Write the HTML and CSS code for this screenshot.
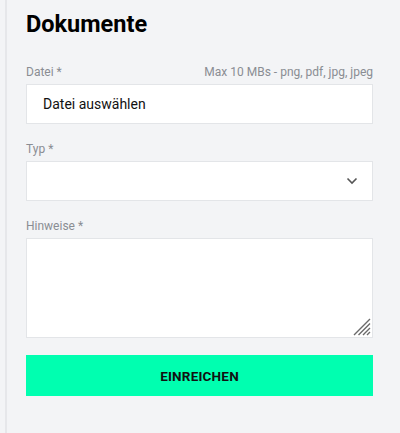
FILE: index.html
```html
<!DOCTYPE html>
<html lang="de">
<head>
<meta charset="utf-8">
<link rel="stylesheet" href="styles.css">
</head>
<body>
<div class="panel">
  <h1 class="title">Dokumente</h1>
  <form class="form">
    <div class="field">
      <div class="label-row"><span class="label">Datei *</span><span class="hint">Max 10 MBs - png, pdf, jpg, jpeg</span></div>
      <div class="box file">Datei auswählen</div>
    </div>
    <div class="field">
      <div class="label-row"><span class="label">Typ *</span></div>
      <div class="box select">
        <svg class="chev" width="12" height="8" viewBox="0 0 12 8"><path d="M1.5 1.5 L6 6 L10.5 1.5" fill="none" stroke="#555" stroke-width="1.6"/></svg>
      </div>
    </div>
    <div class="field">
      <div class="label-row"><span class="label">Hinweise *</span></div>
      <div class="box area">
        <svg class="grip" width="18" height="18" viewBox="0 0 18 18"><path d="M17 1 L1 17 M17 5.5 L5.5 17 M17 10 L10 17 M17 14 L14 17" stroke="#6a6a6a" stroke-width="1.4"/></svg>
      </div>
    </div>
    <button type="button" class="submit">EINREICHEN</button>
  </form>
</div>
</body>
</html>
```
FILE: styles.css
```css
html, body { margin: 0; padding: 0; }
body {
  background: #f3f4f6;
  font-family: Roboto, "Noto Sans", sans-serif;
  width: 400px;
  height: 433px;
  overflow: hidden;
}
.panel {
  margin-left: 5px;
  border-left: 2px solid #e6e7ea;
  padding: 9px 27px 0 19px;
  height: 433px;
  box-sizing: border-box;
}
.title {
  margin: 0;
  font-size: 23.5px;
  font-weight: 700;
  color: #000;
  line-height: 30px;
}
.form { margin-top: 26px; display: flex; flex-direction: column; }
.field { display: flex; flex-direction: column; margin-bottom: 18px; }
.field:last-of-type { margin-bottom: 17px; }
.label-row { display: flex; justify-content: space-between; align-items: baseline; height: 14px; margin-bottom: 5px; font-size: 12px; color: #8a8d93; line-height: 14px; }
.hint { font-size: 12px; color: #8a8d93; }
.box {
  background: #fff;
  border: 1px solid #e3e5e8;
  box-sizing: border-box;
  height: 40px;
  position: relative;
}
.file { display: flex; align-items: center; padding-left: 16px; font-size: 14px; color: #111; }
.select { display: flex; align-items: center; justify-content: flex-end; padding-right: 14px; }
.area { height: 100px; }
.grip { position: absolute; right: 1px; bottom: 1px; }
.submit {
  height: 41px;
  border: none;
  background: #00ffb0;
  font-family: Roboto, sans-serif;
  font-weight: 700;
  font-size: 13.5px;
  color: #111;
  letter-spacing: 0.2px;
}
```
